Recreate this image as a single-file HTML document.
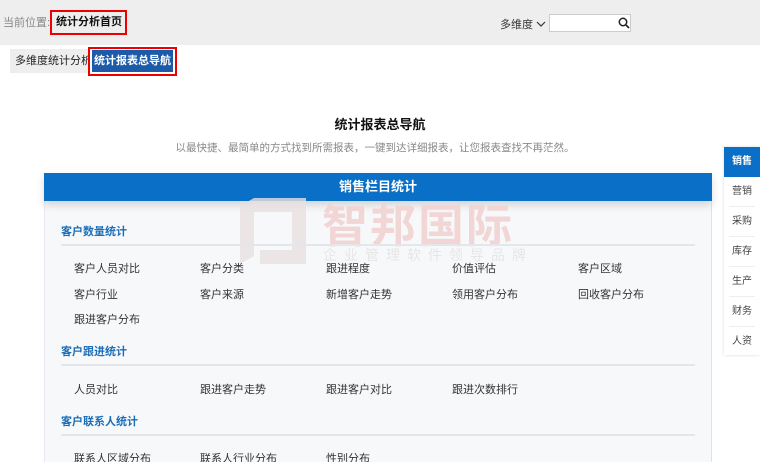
<!DOCTYPE html>
<html><head><meta charset="utf-8"><style>
*{margin:0;padding:0;box-sizing:border-box}
html{width:760px;height:462px;overflow:hidden}
body{width:760px;height:462px;overflow:hidden;background:#fff;font-family:"Liberation Sans","Noto Sans CJK SC",sans-serif;font-size:12px;color:#333;position:relative}
.a{position:absolute;white-space:nowrap}
.top{position:absolute;left:0;top:0;width:760px;height:45px;background:#eeeeee}
.sec{color:#1c6db8;font-weight:bold;font-size:11px}
.line{position:absolute;left:61px;width:634px;height:2px;background:#e3e6ea}
.it{font-size:11px;color:#333}
.nav{position:absolute;left:724px;top:147px;width:36px;height:208px;background:#fff;box-shadow:0 0 3px rgba(0,0,0,.15)}
.nav div{height:30px;line-height:30px;text-align:center;font-size:10px;color:#444;border-bottom:1px solid #eee;margin:0 5px}
</style></head><body>
<div class="top"></div>
<div class="a" style="left:3px;top:14px;color:#888;font-size:11px">当前位置:</div>
<div class="a" style="left:50px;top:10px;width:77px;height:25px;border:2px solid #e00;background:#eee;font-weight:bold;font-size:11px;line-height:21px;padding-left:4px;color:#111">统计分析首页</div>
<div class="a" style="left:500px;top:16px;font-size:11px;color:#333">多维度 <svg width="10" height="8" viewBox="0 0 10 8"><path d="M1 2 L5 6 L9 2" fill="none" stroke="#333" stroke-width="1.2"/></svg></div>
<div class="a" style="left:549px;top:14px;width:82px;height:18px;background:#fff;border:1px solid #ccc"></div>
<svg class="a" style="left:618px;top:17px" width="12" height="12" viewBox="0 0 12 12"><circle cx="5" cy="5" r="3.7" fill="none" stroke="#222" stroke-width="1.5"/><path d="M8 8 L11 11" stroke="#222" stroke-width="1.6"/></svg>
<div class="a" style="left:10px;top:49px;width:80px;height:24px;background:#eee;font-size:11px;line-height:24px;padding-left:5px;color:#222">多维度统计分析</div>
<div class="a" style="left:88px;top:47px;width:89px;height:29px;border:2px solid #e00;background:#fff"></div>
<div class="a" style="left:92px;top:50px;width:81px;height:22px;background:#1d5aa8;color:#fff;font-weight:bold;font-size:11px;line-height:22px;text-align:center">统计报表总导航</div>
<div class="a" style="left:0;width:760px;text-align:center;top:114px;font-weight:bold;font-size:13px;color:#111">统计报表总导航</div>
<div class="a" style="left:0;width:750px;text-align:center;top:140px;font-size:10.5px;color:#888">以最快捷、最简单的方式找到所需报表，一键到达详细报表，让您报表查找不再茫然。</div>
<div class="a" style="left:44px;top:173px;width:668px;height:289px;background:#f7f8fa;border-right:1px solid #dde3ea;border-left:1px solid #e6e9ee"></div>
<div class="a" style="left:44px;top:173px;width:668px;height:28px;background:#0a6fc6;color:#fff;font-weight:bold;font-size:13px;line-height:28px;text-align:center;box-shadow:0 4px 8px rgba(0,0,0,.15)">销售栏目统计</div>
<svg class="a" style="left:240px;top:198px" width="70" height="66" viewBox="0 0 70 66"><path d="M0 8 L14 0 L66 0 L66 66 L20 66 L20 52 L52 52 L52 14 L14 14 L14 58 L0 66 Z" fill="#e8e0e0" opacity=".8"/></svg>
<div class="a" style="left:322px;top:190px;font-size:46px;font-weight:bold;color:#f2d6d6;letter-spacing:2px">智邦国际</div>
<div class="a" style="left:323px;top:245px;font-size:14px;color:#e6e6e6;letter-spacing:7px">企业管理软件领导品牌</div>
<div class="a sec" style="left:61px;top:223px">客户数量统计</div>
<div class="line" style="top:244px"></div>
<div class="a it" style="left:74px;top:260px">客户人员对比</div>
<div class="a it" style="left:200px;top:260px">客户分类</div>
<div class="a it" style="left:326px;top:260px">跟进程度</div>
<div class="a it" style="left:452px;top:260px">价值评估</div>
<div class="a it" style="left:578px;top:260px">客户区域</div>
<div class="a it" style="left:74px;top:286px">客户行业</div>
<div class="a it" style="left:200px;top:286px">客户来源</div>
<div class="a it" style="left:326px;top:286px">新增客户走势</div>
<div class="a it" style="left:452px;top:286px">领用客户分布</div>
<div class="a it" style="left:578px;top:286px">回收客户分布</div>
<div class="a it" style="left:74px;top:311px">跟进客户分布</div>
<div class="a sec" style="left:61px;top:343px">客户跟进统计</div>
<div class="line" style="top:364px"></div>
<div class="a it" style="left:74px;top:381px">人员对比</div>
<div class="a it" style="left:200px;top:381px">跟进客户走势</div>
<div class="a it" style="left:326px;top:381px">跟进客户对比</div>
<div class="a it" style="left:452px;top:381px">跟进次数排行</div>
<div class="a sec" style="left:61px;top:413px">客户联系人统计</div>
<div class="line" style="top:434px"></div>
<div class="a it" style="left:74px;top:450px">联系人区域分布</div>
<div class="a it" style="left:200px;top:450px">联系人行业分布</div>
<div class="a it" style="left:326px;top:450px">性别分布</div>
<div class="nav">
<div style="background:#0a6fc6;color:#fff;font-weight:bold;margin:0;border:none">销售</div>
<div>营销</div><div>采购</div><div>库存</div><div>生产</div><div>财务</div><div style="border:none">人资</div>
</div>
</body></html>
